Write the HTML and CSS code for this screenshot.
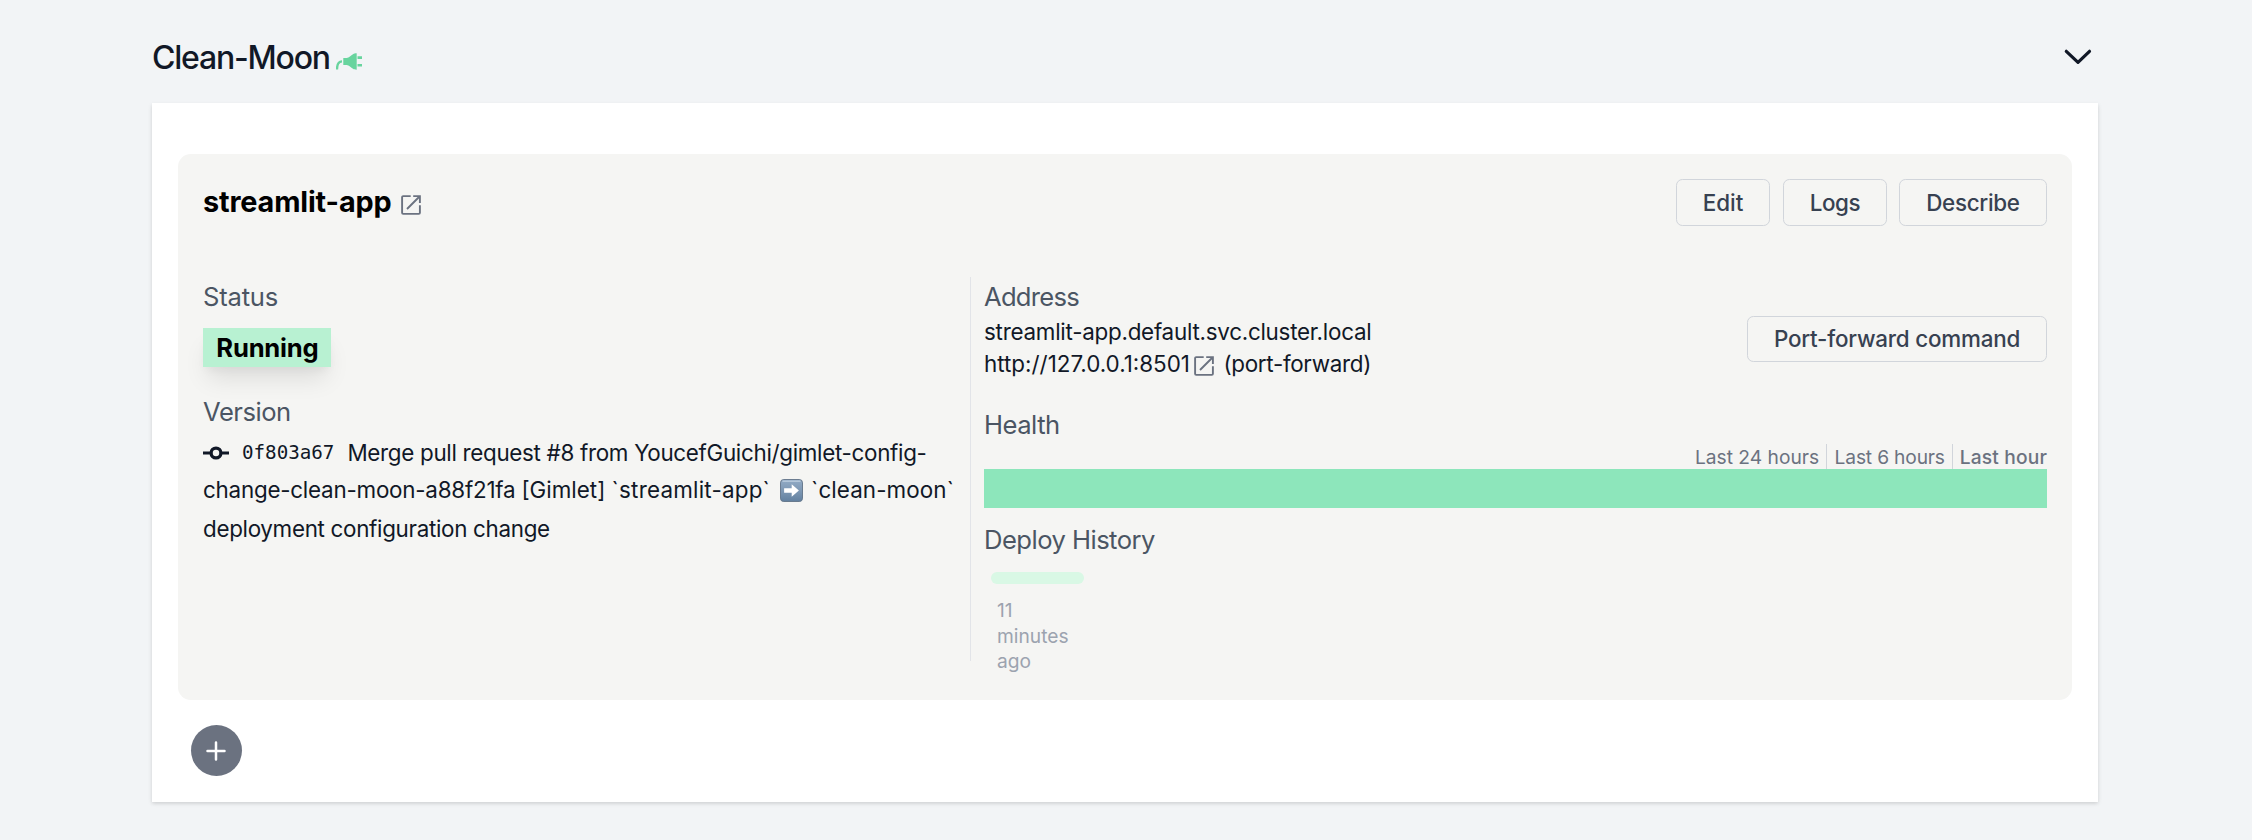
FILE: index.html
```html
<!DOCTYPE html>
<html lang="en">
<head>
<meta charset="utf-8">
<title>Clean-Moon</title>
<link rel="stylesheet" href="styles.css">
</head>
<body>
<svg class="defs" width="0" height="0">
  <symbol id="external" viewBox="0 0 20 20">
    <path d="M9.700 1.100H2.200a1.100 1.100 0 0 0-1.100 1.100v15.600a1.100 1.100 0 0 0 1.100 1.100h15.600a1.100 1.100 0 0 0 1.100-1.100V10.300M12.200 1.100h6.700v6.900M18.500 1.500 6 14" fill="none" stroke="currentColor" stroke-width="1.900"/>
  </symbol>
</svg>
<main class="env">
  <header class="env-head">
    <h1 class="env-title"><span class="t-env">Clean-Moon</span>
      <svg class="plug" viewBox="0 0 26 17"><path d="M1 16.500C1 12 2.300 8.500 6 8.400" fill="none" stroke="currentColor" stroke-width="2.300"/><path d="M7.300 5h3.400C13 4.600 15 2.500 17 1.200 18 .5 19 .3 20.700.3v16.400c-1.700 0-2.700-.2-3.700-.9-2-1.300-4-3.400-6.300-3.800H7.300z" fill="currentColor"/><path d="M21.500 4.600H26M21.500 12.300H26" stroke="currentColor" stroke-width="2.600"/></svg>
    </h1>
    <svg class="chevron" viewBox="0 0 28 16"><path d="M2.300 2.300 14 13.300 25.500 2.300" fill="none" stroke="currentColor" stroke-width="3.200" stroke-linecap="round" stroke-linejoin="round"/></svg>
  </header>
  <div class="panel">
    <section class="service">
      <div class="service-head">
        <h2 class="service-title"><span class="t-app">streamlit-app</span><svg class="ext"><use href="#external"/></svg></h2>
        <div class="actions">
          <button class="btn edit">Edit</button><button class="btn logs">Logs</button><button class="btn describe">Describe</button>
        </div>
      </div>
      <div class="columns">
        <div class="left">
          <h3 class="label"><span class="t-status">Status</span></h3>
          <div class="badge"><span class="t-running">Running</span></div>
          <h3 class="label version-label"><span class="t-version">Version</span></h3>
          <div class="version">
            <div class="row"><svg class="commit" viewBox="0 0 26 14"><path d="M0 7h7.500M18.500 7H26" stroke="currentColor" stroke-width="2.900"/><circle cx="13" cy="7" r="4.900" fill="none" stroke="currentColor" stroke-width="3.300"/></svg><span class="sha">0f803a67</span><span class="t-l1">Merge pull request #8 from YoucefGuichi/gimlet-config-</span></div>
            <div class="row"><span class="t-l2">change-clean-moon-a88f21fa </span><span class="t-tag">[Gimlet] </span><span class="t-name">`streamlit-app`</span><svg class="emoji" viewBox="0 0 24 24"><defs><linearGradient id="key" x2="0" y2="1"><stop offset="0" stop-color="#92abc5"/><stop offset=".5" stop-color="#7e98b4"/><stop offset="1" stop-color="#62809f"/></linearGradient></defs><rect x=".5" y=".5" width="23" height="23" rx="3.500" fill="url(#key)" stroke="#65778b"/><path d="M2.500 2.300h19" stroke="#b7c9dc" stroke-width="1.500"/><path d="M4.300 9.600h7.900V5.500l7.500 6.500-7.500 6.500v-4.100H4.300z" fill="#fff"/></svg><span class="t-l2b">`clean-moon`</span></div>
            <div class="row"><span class="t-l3">deployment configuration change</span></div>
          </div>
        </div>
        <div class="right">
          <div class="address">
            <div>
              <h3 class="label"><span class="t-address">Address</span></h3>
              <div class="line"><span class="t-host">streamlit-app.default.svc.cluster.local</span></div>
              <div class="line"><span class="t-url">http://127.0.0.1:8501</span><svg class="ext small"><use href="#external"/></svg><span class="t-pf">(port-forward)</span></div>
            </div>
            <button class="btn forward">Port-forward command</button>
          </div>
          <h3 class="label health"><span class="t-health">Health</span></h3>
          <div class="ranges"><span class="range r24">Last 24 hours</span><span class="range r6">Last 6 hours</span><span class="range active">Last hour</span></div>
          <div class="bar"></div>
          <h3 class="label deploy"><span class="t-deploy">Deploy History</span></h3>
          <div class="history"><div class="pill"></div><p class="ago">11 minutes ago</p></div>
        </div>
      </div>
    </section>
    <button class="add"><svg viewBox="0 0 20 20"><path d="M10 1.500v17M1.500 10h17" stroke="currentColor" stroke-width="2.500" stroke-linecap="round"/></svg></button>
  </div>
</main>
</body>
</html>
```
FILE: styles.css
```css
* { box-sizing: border-box; margin: 0; padding: 0; }
body { background: #f2f4f6; color: #111827; font-family: Inter, "Liberation Sans", sans-serif; font-size: 22.4px; line-height: 32px; height: 840px; overflow: hidden; }
svg { display: block; flex: none; }
.defs { position: absolute; }
span { white-space: pre; }
.env { width: 1946px; margin-left: 152px; padding-top: 32px; }
.env-head { display: flex; justify-content: space-between; height: 71px; padding-right: 6px; }
.env-title { display: flex; font-size: 32px; line-height: 52px; font-weight: 500; letter-spacing: -1.220px; }
.plug { width: 26px; height: 17px; margin: 20.500px 0 0 6px; color: #68d49e; }
.chevron { width: 28px; height: 16px; margin-top: 17px; }
.panel { background: #fff; height: 699px; padding: 51px 26px 0; box-shadow: 0 1.600px 4.800px rgba(0,0,0,.1), 0 1.600px 3.200px rgba(0,0,0,.06); }
.service { background: #f5f5f3; height: 546px; border-radius: 12.800px; padding: 25.200px 25px 0; }
.service-head { display: flex; justify-content: space-between; height: 98px; }
.service-title { display: flex; color: #000; font-size: 28.800px; line-height: 46px; font-weight: 700; letter-spacing: -.140px; }
.ext { width: 20px; height: 20px; margin: 16px 0 0 10px; color: #6b7280; }
.ext.small { margin: 8.500px 9px 0 4.500px; }
.actions { display: flex; }
.btn { font: 500 22.400px/32px Inter, sans-serif; color: #374151; background: transparent; border: 1px solid #d1d5db; border-radius: 6.400px; height: 47px; white-space: nowrap; }
.edit { width: 94px; }
.logs { width: 104px; margin: 0 12px 0 13px; letter-spacing: -.400px; }
.describe { width: 148px; letter-spacing: -.300px; }
.columns { display: flex; }
.left { width: 768px; height: 384px; border-right: 1px solid #e2e4e8; }
.right { width: 1063px; margin-left: 13px; }
.label { color: #4b5563; font-size: 25.600px; font-weight: 400; line-height: 38.400px; height: 38.400px; padding-top: 1px; letter-spacing: -.480px; }
.t-status { letter-spacing: -.200px; }
.t-address { letter-spacing: -.750px; }
.t-deploy { letter-spacing: -.530px; }
.badge { width: 128px; height: 39px; margin-top: 12.600px; padding: 1px 0 0 13.300px; background: #b8f1d2; color: #000; font-size: 25.600px; font-weight: 700; line-height: 38.400px; letter-spacing: -.200px; box-shadow: 0 16px 24px -4.800px rgba(0,0,0,.1), 0 6.400px 9.600px -3.200px rgba(0,0,0,.05); }
.version-label { margin-top: 25.200px; }
.version { padding-top: 2px; }
.row { display: flex; line-height: 38.400px; height: 38.400px; }
.commit { width: 26px; height: 14px; margin-top: 13.500px; }
.sha { font-family: "DejaVu Sans Mono", monospace; font-size: 19.200px; margin: 1px 13px 0 13px; }
.t-l1, .t-l3 { letter-spacing: -.310px; padding-top: .8px; }
.t-l2 { letter-spacing: -.230px; }
.t-name { letter-spacing: .220px; }
.t-l2b { letter-spacing: .100px; }
.emoji { width: 23px; height: 23px; margin: 8px 8.500px 0 9.500px; }
.address { display: flex; justify-content: space-between; }
.line { display: flex; height: 32px; }
.t-host { letter-spacing: -.250px; }
.t-pf { letter-spacing: -.300px; }
.forward { width: 300px; height: 46px; margin-top: 39px; letter-spacing: -.200px; }
.health { margin-top: 25.600px; }
.ranges { display: flex; justify-content: flex-end; height: 25.600px; color: #6b7280; font-size: 19.200px; line-height: 27.600px; }
.range { margin-left: 8px; height: 25.600px; }
.r24, .r6 { border-right: 1px solid #d1d5db; padding-right: 7px; }
.r6 { letter-spacing: -.170px; margin-left: 7.500px; }
.active { font-weight: 500; letter-spacing: .150px; margin-left: 7px; }
.bar { height: 39px; background: #8de6bb; }
.deploy { margin-top: 12.600px; padding-top: 0; }
.history { width: 93px; margin: 13px 0 0 7px; }
.pill { height: 12px; border-radius: 6px; background: #d9f8e5; }
.ago { padding: 13.800px 6px 0; color: #9ca3af; font-size: 19.200px; line-height: 25.600px; }
.add { display: flex; align-items: center; justify-content: center; width: 51px; height: 51px; margin: 25px 0 0 13px; padding-right: 1px; border: 0; border-radius: 50%; background: #6b7280; color: #fff; }
.add svg { width: 20px; height: 20px; }
```
